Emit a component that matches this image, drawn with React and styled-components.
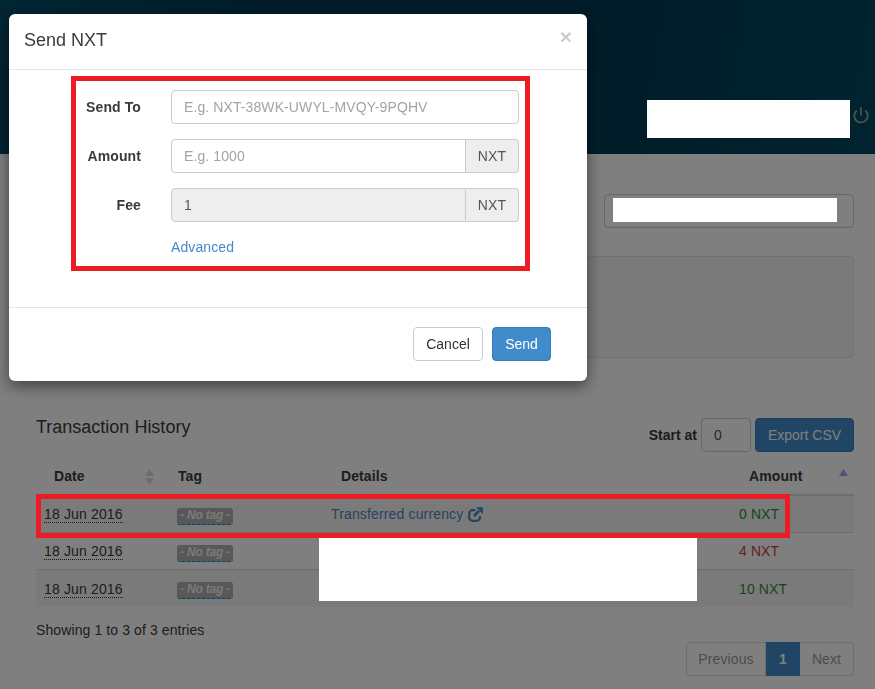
import React from 'react';
import styled, { createGlobalStyle } from 'styled-components';
import { Power } from 'lucide-react';

const GlobalStyle = createGlobalStyle`
  html, body {
    margin: 0;
    height: 100%;
    overflow: hidden;
    background: #fff;
  }
  body {
    font-family: "Liberation Sans", Arial, sans-serif;
    font-size: 14px;
    line-height: 20px;
    letter-spacing: 0.1px;
    color: #3a3a3a;
  }
  * {
    box-sizing: border-box;
  }
`;

const Page = styled.div`
  width: 875px;
  height: 689px;
  overflow: hidden;
`;

const Banner = styled.header`
  height: 154px;
  padding: 100px 5px 0 0;
  display: flex;
  justify-content: flex-end;
  align-items: flex-start;
  gap: 2px;
  background: linear-gradient(100deg, #054a68 0%, #003a52 30%, #003a52 66%, #02465f 100%);
`;

const Redacted = styled.div`
  position: relative;
  z-index: 20;
  background: #fff;
`;

const BannerRedaction = styled(Redacted)`
  width: 203px;
  height: 38px;
`;

const PowerButton = styled.span`
  display: flex;
  margin-top: 6px;
  color: #a4a4a4;
`;

const Content = styled.main`
  padding: 40px 21px 0 36px;
`;

const AccountRow = styled.div`
  display: flex;
  justify-content: flex-end;
`;

const AccountBox = styled.div`
  width: 250px;
  height: 34px;
  padding: 3px 16px 5px 8px;
  border: 1px solid #ccc;
  border-radius: 4px;
`;

const AccountRedaction = styled(Redacted)`
  height: 24px;
`;

const Well = styled.div`
  height: 102px;
  margin-top: 28px;
  background: #f5f5f5;
  border: 1px solid #e3e3e3;
  border-radius: 4px;
`;

const HistoryBar = styled.div`
  display: flex;
  justify-content: space-between;
  align-items: flex-start;
  margin-top: 60px;
`;

const HistoryTitle = styled.h3`
  margin: 0;
  font-size: 18px;
  font-weight: 400;
  line-height: 18px;
  letter-spacing: 0;
`;

const HistoryTools = styled.div`
  display: flex;
  align-items: center;
  gap: 4px;
`;

const StartLabel = styled.label`
  font-weight: 700;
  letter-spacing: 0;
`;

const StartInput = styled.div`
  width: 50px;
  height: 34px;
  padding: 6px 12px;
  border: 1px solid #ccc;
  border-radius: 4px;
  color: #555;
`;

const ExportButton = styled.button`
  width: 99px;
  height: 34px;
  padding: 0;
  font: inherit;
  color: #fff;
  background: #428bca;
  border: 1px solid #357ebd;
  border-radius: 4px;
`;

const TableWrap = styled.div`
  position: relative;
  margin-top: 6px;
`;

const Table = styled.table`
  width: 818px;
  table-layout: fixed;
  border-collapse: separate;
  border-spacing: 0;
`;

const HeadCell = styled.th`
  position: relative;
  height: 38px;
  padding: 0 0 0 ${({ $indent }) => $indent}px;
  text-align: left;
  font-weight: 700;
  letter-spacing: 0.1px;
  border-bottom: 2px solid #ddd;
`;

const SortMark = styled.svg`
  position: absolute;
  top: ${({ $top }) => $top}px;
  right: ${({ $right }) => $right}px;
`;

const Row = styled.tr`
  background: ${({ $striped }) => ($striped ? '#f5f5f5' : '#fff')};
`;

const Cell = styled.td`
  height: 37px;
  padding: 0 0 0 ${({ $indent }) => $indent}px;
  white-space: nowrap;
  border-bottom: ${({ $last }) => ($last ? '0' : '1px solid #ddd')};
`;

const DateText = styled.span`
  letter-spacing: 0.15px;
  border-bottom: 1px dotted #333;
`;

const TagBadge = styled.span`
  display: inline-block;
  width: 56px;
  height: 17px;
  margin-top: 1px;
  font-size: 12px;
  line-height: 15px;
  font-weight: 700;
  font-style: italic;
  letter-spacing: -0.2px;
  text-align: center;
  color: #f4f4f4;
  background: #b0b0b0;
  border-bottom: 1px dashed #08c;
  border-radius: 3px;
`;

const DetailLink = styled.a`
  display: inline-flex;
  align-items: center;
  gap: 5px;
  letter-spacing: 0.15px;
  color: #4a88c2;
`;

const AmountText = styled.span`
  color: ${({ $negative }) => ($negative ? '#d43a3a' : '#2e8b36')};
`;

const TableRedaction = styled(Redacted)`
  position: absolute;
  left: 283px;
  top: 80px;
  width: 378px;
  height: 63px;
`;

const RowMarker = styled.div`
  position: absolute;
  z-index: 20;
  left: 0;
  top: 36px;
  width: 754px;
  height: 44px;
  border: 5px solid #ed1c24;
`;

const Summary = styled.div`
  margin-top: 13px;
`;

const Pagination = styled.nav`
  display: flex;
  justify-content: flex-end;
  margin-top: 2px;
`;

const PageLink = styled.span`
  width: ${({ $width }) => $width}px;
  height: 34px;
  line-height: 32px;
  text-align: center;
  color: ${({ $active }) => ($active ? '#fff' : '#999')};
  font-weight: ${({ $active }) => ($active ? 700 : 400)};
  background: ${({ $active }) => ($active ? '#428bca' : '#fff')};
  border: 1px solid ${({ $active }) => ($active ? '#428bca' : '#ddd')};
  border-left-width: ${({ $first, $active }) => ($first || $active ? 1 : 0)}px;
  border-radius: ${({ $first, $end }) => ($first ? '4px 0 0 4px' : $end ? '0 4px 4px 0' : '0')};
`;

const Backdrop = styled.div`
  position: fixed;
  inset: 0;
  z-index: 10;
  background: rgba(0, 0, 0, 0.5);
`;

const Modal = styled.section`
  position: fixed;
  z-index: 15;
  left: 9px;
  top: 14px;
  width: 578px;
  height: 367px;
  display: flex;
  flex-direction: column;
  background: #fff;
  border-radius: 6px;
  box-shadow: 0 5px 15px rgba(0, 0, 0, 0.5);
`;

const ModalHeader = styled.div`
  height: 56px;
  padding: 0 15px 4px;
  display: flex;
  justify-content: space-between;
  align-items: center;
  border-bottom: 1px solid #e5e5e5;
`;

const ModalTitle = styled.h4`
  margin: 0;
  font-size: 18px;
  font-weight: 400;
  letter-spacing: 0;
`;

const CloseButton = styled.span`
  margin: -6px 0 0;
  font-size: 21px;
  font-weight: 700;
  color: #000;
  opacity: 0.2;
`;

const ModalBody = styled.div`
  position: relative;
  flex: 1;
  padding: 20px 68px 0 0;
  display: flex;
  flex-direction: column;
  gap: 15px;
  border-bottom: 1px solid #e5e5e5;
`;

const FormMarker = styled.div`
  position: absolute;
  left: 62px;
  top: 6px;
  width: 459px;
  height: 195px;
  border: 5px solid #ed1c24;
`;

const FormRow = styled.div`
  display: grid;
  grid-template-columns: 132px 1fr;
  column-gap: 30px;
  align-items: center;
`;

const FieldLabel = styled.label`
  text-align: right;
  font-weight: 700;
  letter-spacing: 0.1px;
`;

const InputGroup = styled.div`
  display: flex;
  height: 34px;
`;

const Field = styled.div`
  flex: 1;
  padding: 6px 12px;
  color: ${({ $disabled }) => ($disabled ? '#555' : '#a4a4a4')};
  background: ${({ $disabled }) => ($disabled ? '#eee' : '#fff')};
  border: 1px solid #ccc;
  border-radius: ${({ $grouped }) => ($grouped ? '4px 0 0 4px' : '4px')};
`;

const Addon = styled.div`
  width: 53px;
  padding: 6px 0;
  text-align: center;
  color: #555;
  background: #eee;
  border: 1px solid #ccc;
  border-left: 0;
  border-radius: 0 4px 4px 0;
`;

const AdvancedLink = styled.a`
  color: #428bca;
`;

const ModalFooter = styled.div`
  height: 73px;
  padding: 19px 36px 0 0;
  display: flex;
  justify-content: flex-end;
  align-items: flex-start;
  gap: 9px;
`;

const FooterButton = styled.button`
  width: ${({ $width }) => $width}px;
  height: 34px;
  padding: 0;
  font: inherit;
  color: ${({ $primary }) => ($primary ? '#fff' : '#333')};
  background: ${({ $primary }) => ($primary ? '#428bca' : '#fff')};
  border: 1px solid ${({ $primary }) => ($primary ? '#357ebd' : '#ccc')};
  border-radius: 4px;
`;

const ShareIcon = () => (
  <svg width="15" height="15" viewBox="0 0 15 15" fill="none" stroke="currentColor" strokeWidth="2.2">
    <path d="M7.5 3.2H4.6A3.4 3.4 0 0 0 1.2 6.6v3.8a3.4 3.4 0 0 0 3.4 3.4h4a3.4 3.4 0 0 0 3.4-3.4V9" />
    <path d="M6 9 11 4" strokeWidth="2.6" />
    <path d="M8 0.3H14.8V7.1Z" fill="currentColor" stroke="none" />
  </svg>
);

const rows = [
  { tag: '- No tag -', amount: '0 NXT', detail: true },
  { tag: '- No tag -', amount: '4 NXT', negative: true },
  { tag: '- No tag -', amount: '10 NXT' },
];

export default function App() {
  return (
    <Page>
      <GlobalStyle />
      <Banner>
        <BannerRedaction />
        <PowerButton>
          <Power size={18} strokeWidth={2.3} />
        </PowerButton>
      </Banner>

      <Content>
        <AccountRow>
          <AccountBox>
            <AccountRedaction />
          </AccountBox>
        </AccountRow>
        <Well />

        <HistoryBar>
          <HistoryTitle>Transaction History</HistoryTitle>
          <HistoryTools>
            <StartLabel>Start at</StartLabel>
            <StartInput>0</StartInput>
            <ExportButton>Export CSV</ExportButton>
          </HistoryTools>
        </HistoryBar>

        <TableWrap>
          <Table>
            <colgroup>
              <col style={{ width: 133 }} />
              <col style={{ width: 154 }} />
              <col style={{ width: 374 }} />
              <col style={{ width: 157 }} />
            </colgroup>
            <thead>
              <tr>
                <HeadCell $indent={18}>
                  Date
                  <SortMark $top={11} $right={15} width="9" height="16" viewBox="0 0 9 16" fill="#d8d8d8">
                    <path d="M4.5 0 9 7H0Z" />
                    <path d="M4.5 16 9 9H0Z" />
                  </SortMark>
                </HeadCell>
                <HeadCell $indent={9}>Tag</HeadCell>
                <HeadCell $indent={18}>Details</HeadCell>
                <HeadCell $indent={52}>
                  Amount
                  <SortMark $top={11} $right={6} width="9" height="7" viewBox="0 0 9 7" fill="#a0a0ff">
                    <path d="M4.5 0 9 7H0Z" />
                  </SortMark>
                </HeadCell>
              </tr>
            </thead>
            <tbody>
              {rows.map((row, i) => (
                <Row key={i} $striped={i !== 1}>
                  <Cell $indent={8} $last={i === 2}>
                    <DateText>18 Jun 2016</DateText>
                  </Cell>
                  <Cell $indent={8} $last={i === 2}>
                    <TagBadge>{row.tag}</TagBadge>
                  </Cell>
                  <Cell $indent={8} $last={i === 2}>
                    {row.detail && (
                      <DetailLink>
                        Transferred currency <ShareIcon />
                      </DetailLink>
                    )}
                  </Cell>
                  <Cell $indent={42} $last={i === 2}>
                    <AmountText $negative={row.negative}>{row.amount}</AmountText>
                  </Cell>
                </Row>
              ))}
            </tbody>
          </Table>
          <RowMarker />
          <TableRedaction />
        </TableWrap>

        <Summary>Showing 1 to 3 of 3 entries</Summary>
        <Pagination>
          <PageLink $width={80} $first>Previous</PageLink>
          <PageLink $width={34} $active>1</PageLink>
          <PageLink $width={54} $end>Next</PageLink>
        </Pagination>
      </Content>

      <Backdrop />
      <Modal>
        <ModalHeader>
          <ModalTitle>Send NXT</ModalTitle>
          <CloseButton>×</CloseButton>
        </ModalHeader>
        <ModalBody>
          <FormRow>
            <FieldLabel>Send To</FieldLabel>
            <InputGroup>
              <Field>E.g. NXT-38WK-UWYL-MVQY-9PQHV</Field>
            </InputGroup>
          </FormRow>
          <FormRow>
            <FieldLabel>Amount</FieldLabel>
            <InputGroup>
              <Field $grouped>E.g. 1000</Field>
              <Addon>NXT</Addon>
            </InputGroup>
          </FormRow>
          <FormRow>
            <FieldLabel>Fee</FieldLabel>
            <InputGroup>
              <Field $grouped $disabled>1</Field>
              <Addon>NXT</Addon>
            </InputGroup>
          </FormRow>
          <FormRow>
            <span />
            <AdvancedLink>Advanced</AdvancedLink>
          </FormRow>
          <FormMarker />
        </ModalBody>
        <ModalFooter>
          <FooterButton $width={70}>Cancel</FooterButton>
          <FooterButton $width={59} $primary>Send</FooterButton>
        </ModalFooter>
      </Modal>
    </Page>
  );
}
